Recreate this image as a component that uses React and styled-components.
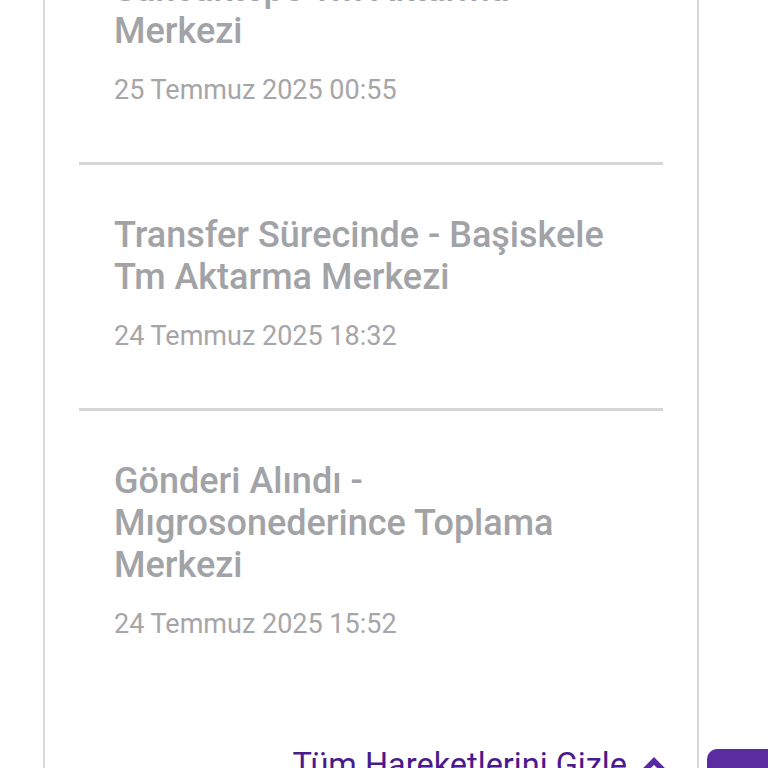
import styled, { createGlobalStyle } from 'styled-components'

const GlobalStyle = createGlobalStyle`
  html, body {
    margin: 0;
    padding: 0;
    background: #ffffff;
  }
  body {
    font-family: Roboto, "Noto Sans", "Liberation Sans", sans-serif;
    overflow: hidden;
  }
`

const movements = [
  { title: 'Transfer Sürecinde - Sancaktepe Tm Aktarma Merkezi', date: '25 Temmuz 2025 00:55' },
  { title: 'Transfer Sürecinde - Başiskele Tm Aktarma Merkezi', date: '24 Temmuz 2025 18:32' },
  { title: 'Gönderi Alındı - Mıgrosonederince Toplama Merkezi', date: '24 Temmuz 2025 15:52' },
]

const App = () => {
  return (
    <>
      <GlobalStyle />
      <PageStyle>
        <CardStyle>
          <ListStyle>
            {movements.map((m) => (
              <ItemStyle key={m.date}>
                <TitleStyle>{m.title}</TitleStyle>
                <DateStyle>{m.date}</DateStyle>
              </ItemStyle>
            ))}
          </ListStyle>
          <FooterStyle>
            <ToggleLink>
              Tüm Hareketlerini Gizle
              <svg width="26" height="18" viewBox="0 0 26 18" aria-hidden="true">
                <path d="M3 15 L13 5 L23 15" fill="none" stroke="#5a2aa0" strokeWidth="5.5" strokeLinejoin="miter" />
              </svg>
            </ToggleLink>
          </FooterStyle>
        </CardStyle>
        <SideButton />
      </PageStyle>
    </>
  )
}

// the page is scrolled: the card starts above the top edge
const PageStyle = styled.div`
  display: flex;
  align-items: flex-start;
  gap: 8px;
  height: 768px;
  overflow: hidden;
  padding-left: 43px;
  box-sizing: border-box;
`

const CardStyle = styled.div`
  flex: 0 0 656px;
  box-sizing: border-box;
  margin-top: -125px;
  border: 2px solid #d9d9d9;
  border-radius: 12px;
  background: #fff;
`

const ListStyle = styled.div`
  display: flex;
  flex-direction: column;
  padding: 0 34px;
`

const ItemStyle = styled.div`
  display: flex;
  flex-direction: column;
  gap: 20px;
  padding: 49px 0 54px 35px;
  border-bottom: 3px solid #d6d6d6;
  &:last-child {
    border-bottom: none;
  }
`

const TitleStyle = styled.div`
  font-size: 36px;
  line-height: 42px;
  font-weight: 500;
  color: #a2a3a6;
  padding-right: 42px;
`

const DateStyle = styled.div`
  font-size: 27px;
  line-height: 36px;
  color: #a6a6a8;
`

const FooterStyle = styled.div`
  display: flex;
  justify-content: flex-end;
  padding: 49px 30px 40px 0;
`

const ToggleLink = styled.a`
  display: flex;
  align-items: center;
  gap: 14px;
  font-size: 32.5px;
  line-height: 40px;
  color: #4a1b8c;
  text-decoration: none;
  cursor: pointer;
`

const SideButton = styled.div`
  align-self: flex-end;
  flex: 0 0 120px;
  height: 48px;
  margin-bottom: -29px;
  border-radius: 10px;
  background: #5b2ba0;
`

export default App
